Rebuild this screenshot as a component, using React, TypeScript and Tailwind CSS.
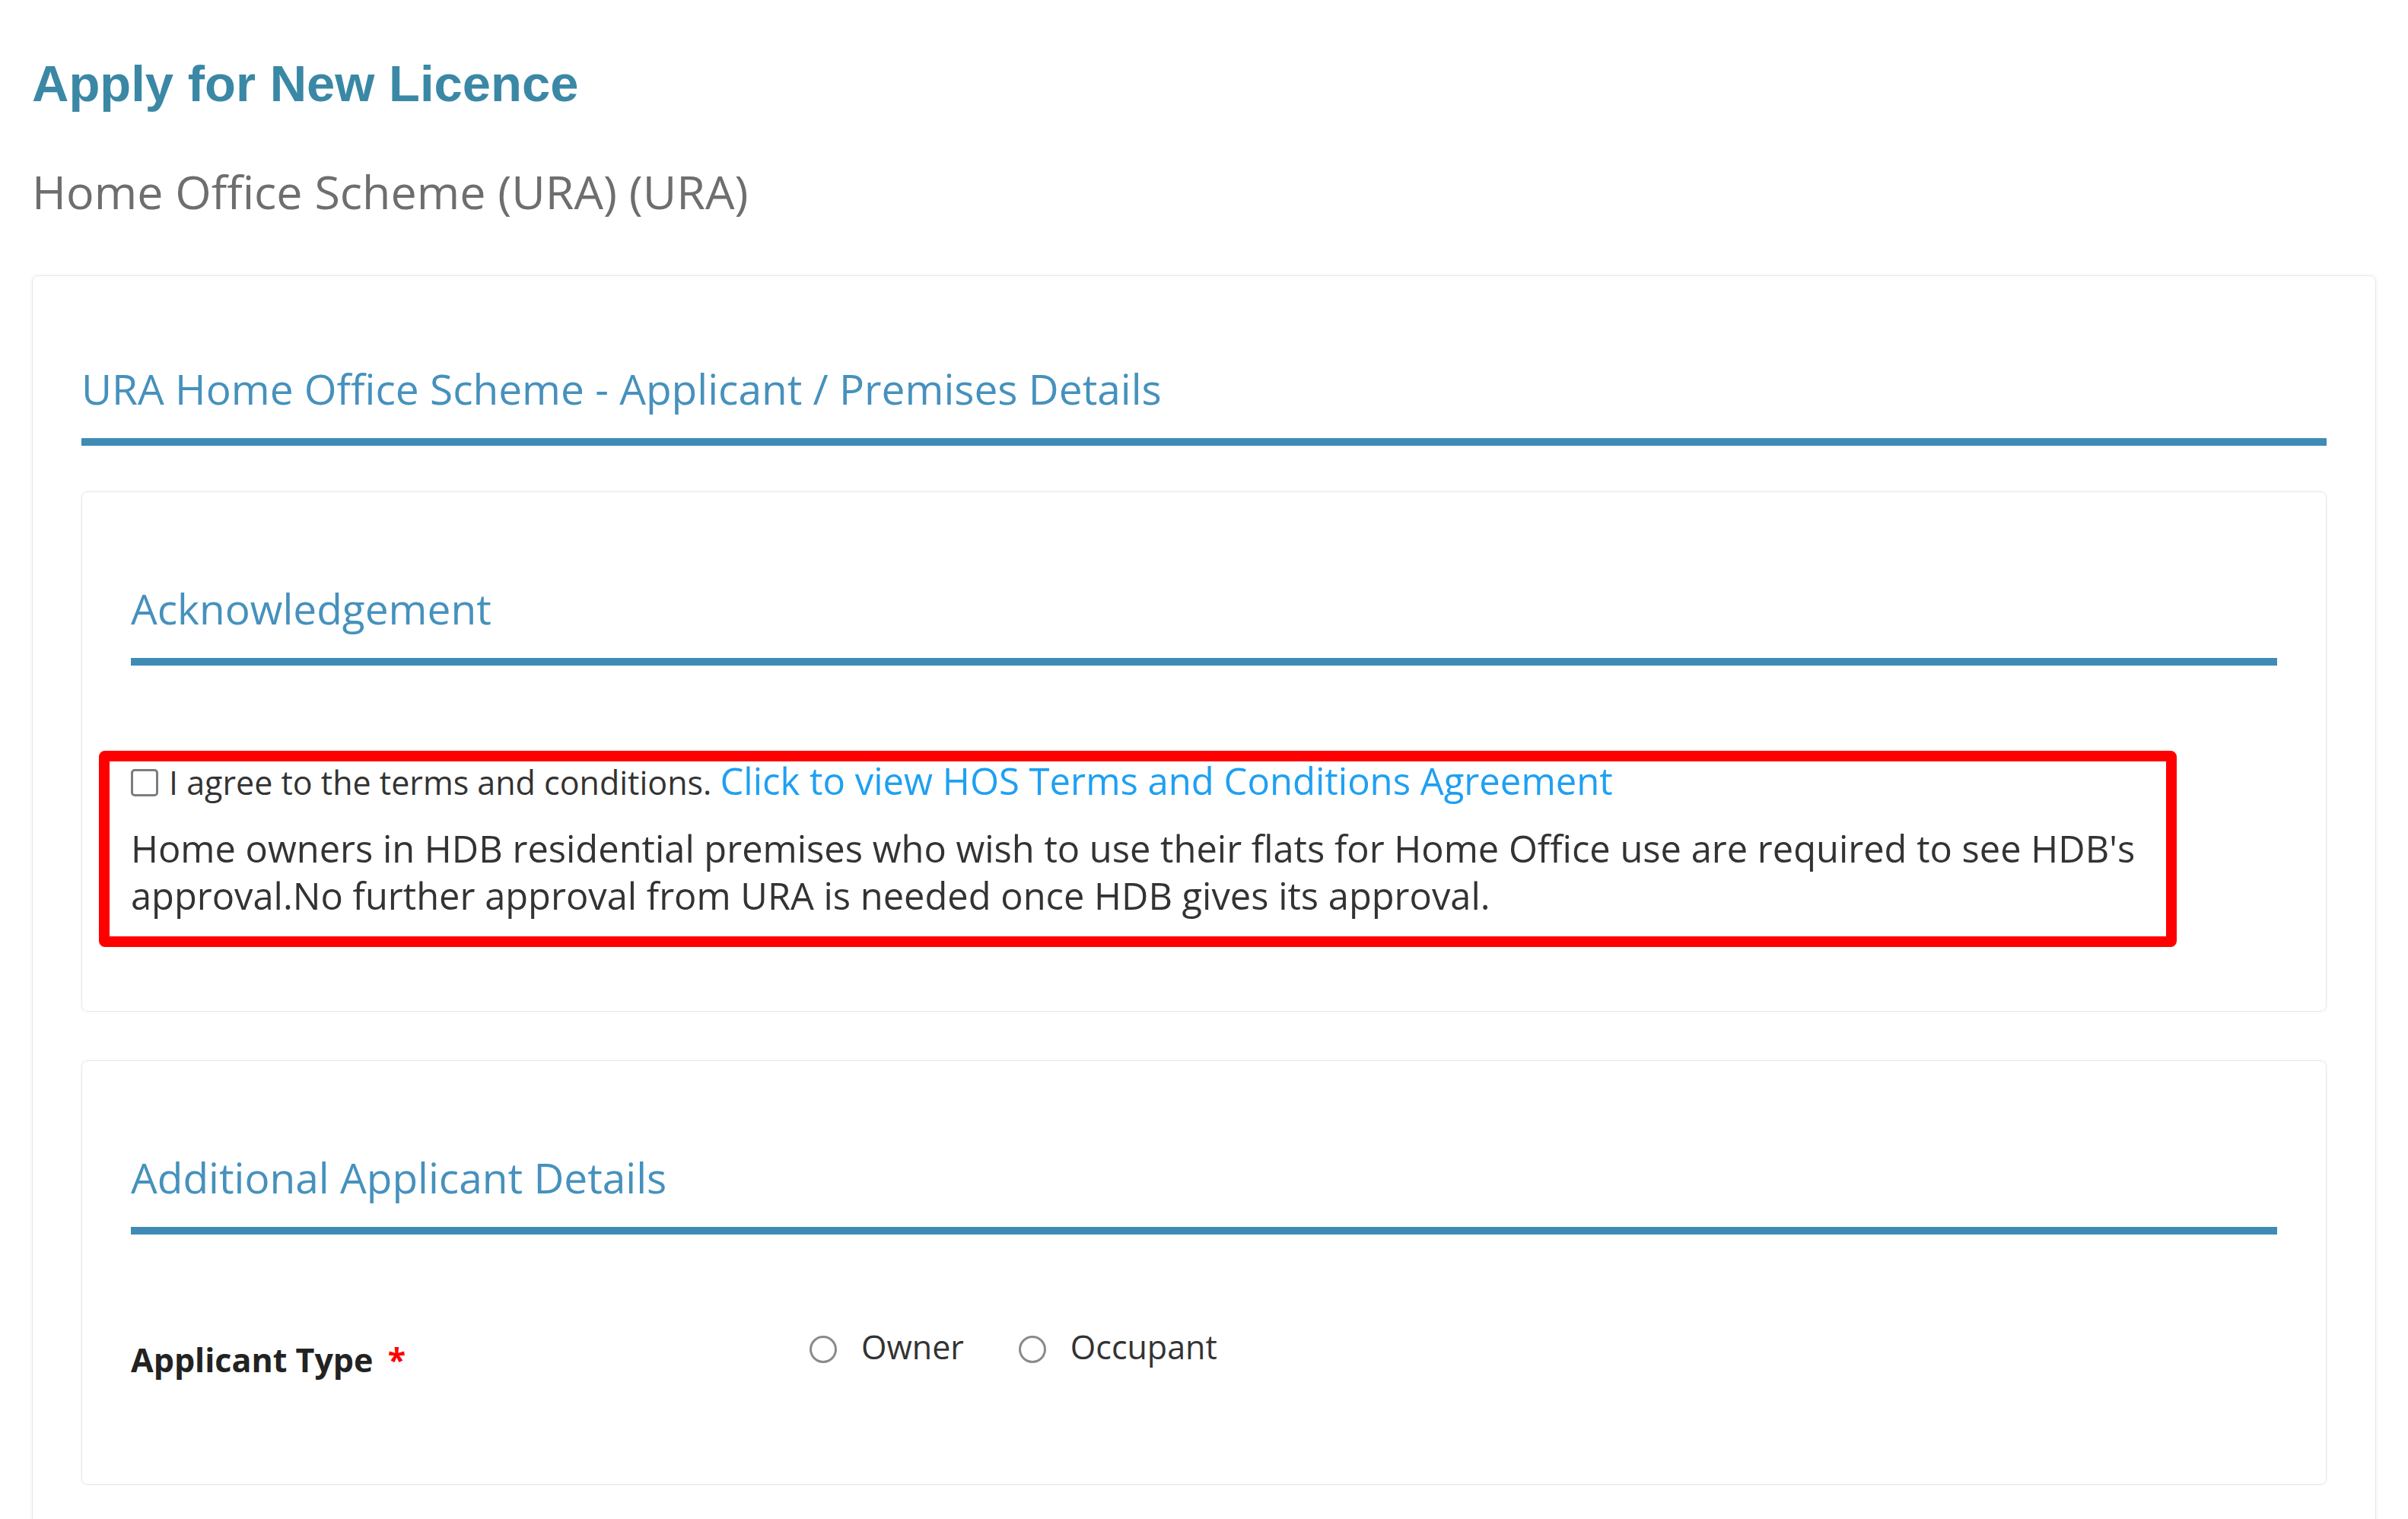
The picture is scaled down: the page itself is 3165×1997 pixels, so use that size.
import React from "react";

/* ── Bits ─────────────────────────────────────────────────────────────────── */
function SectionHeading({ children }: { children: React.ReactNode }) {
  return (
    <div>
      <h3 className="text-[55px] leading-[72px] font-normal text-[#4691bd]">{children}</h3>
      <div className="mt-[29px] h-[10px] bg-[#3f8bb6]" />
    </div>
  );
}

function Radio({ label }: { label: string }) {
  return (
    <label className="flex items-center gap-[32px]">
      <span className="mt-[6px] inline-block h-[36px] w-[36px] rounded-full border-[3px] border-[#8a8a8a] bg-white" />
      <span className="text-[43px] leading-[60px] text-[#333]">{label}</span>
    </label>
  );
}

/* ── Page ─────────────────────────────────────────────────────────────────── */
export default function App() {
  return (
    <main className="min-h-screen bg-white px-[42px] pt-[70px] font-['Open_Sans','Noto_Sans',sans-serif]">
      <h1 className="font-['Liberation_Sans',Arial,sans-serif] text-[67px] leading-[80px] font-bold text-[#3a88a5]">
        Apply for New Licence
      </h1>
      <h2 className="mt-[62px] text-[61px] leading-[80px] font-normal text-[#6e6e6e]">
        Home Office Scheme (URA) (URA)
      </h2>

      <section className="mt-[70px] rounded-[8px] border border-[#e8e8e8] px-[64px] pt-[112px] pb-[200px] shadow-[0_0_4px_rgba(0,0,0,0.07)]">
        <SectionHeading>URA Home Office Scheme - Applicant / Premises Details</SectionHeading>

        {/* Acknowledgement */}
        <div className="mt-[60px] rounded-[8px] border border-[#e8e8e8] px-[64px] pt-[117px] pb-[84px] shadow-[0_0_4px_rgba(0,0,0,0.06)]">
          <SectionHeading>Acknowledgement</SectionHeading>

          <div className="mt-[112px] ml-[-42px] w-[2731px] rounded-[8px] border-[14px] border-[#ff0000] pl-[28px] pr-[20px] pb-[23px]">
            <div className="text-[43px] leading-[50px] text-[#333]">
              <span className="mr-[14px] inline-block h-[36px] w-[36px] rounded-[5px] border-[3px] border-[#7d7d7d] bg-white align-[-2px]" />
              I agree to the terms and conditions.{" "}
              <a className="text-[49px] leading-[50px] text-[#1fa0f2]">
                Click to view HOS Terms and Conditions Agreement
              </a>
            </div>
            <p className="mt-[30px] text-[48.8px] leading-[62px] text-[#333]">
              Home owners in HDB residential premises who wish to use their flats for Home Office use are
              required to see HDB's approval.No further approval from URA is needed once HDB gives its
              approval.
            </p>
          </div>
        </div>

        {/* Additional Applicant Details */}
        <div className="mt-[64px] rounded-[8px] border border-[#e8e8e8] px-[64px] pt-[117px] pb-[133px] shadow-[0_0_4px_rgba(0,0,0,0.06)]">
          <SectionHeading>Additional Applicant Details</SectionHeading>

          <div className="mt-[118px] grid grid-cols-[892px_1fr] items-start">
            <div className="pt-[17px] text-[43px] leading-[60px] font-bold text-[#222]">
              Applicant Type <span className="ml-[8px] text-[#ff0000]">*</span>
            </div>
            <div className="flex items-center gap-[72px]">
              <Radio label="Owner" />
              <Radio label="Occupant" />
            </div>
          </div>
        </div>
      </section>
    </main>
  );
}
